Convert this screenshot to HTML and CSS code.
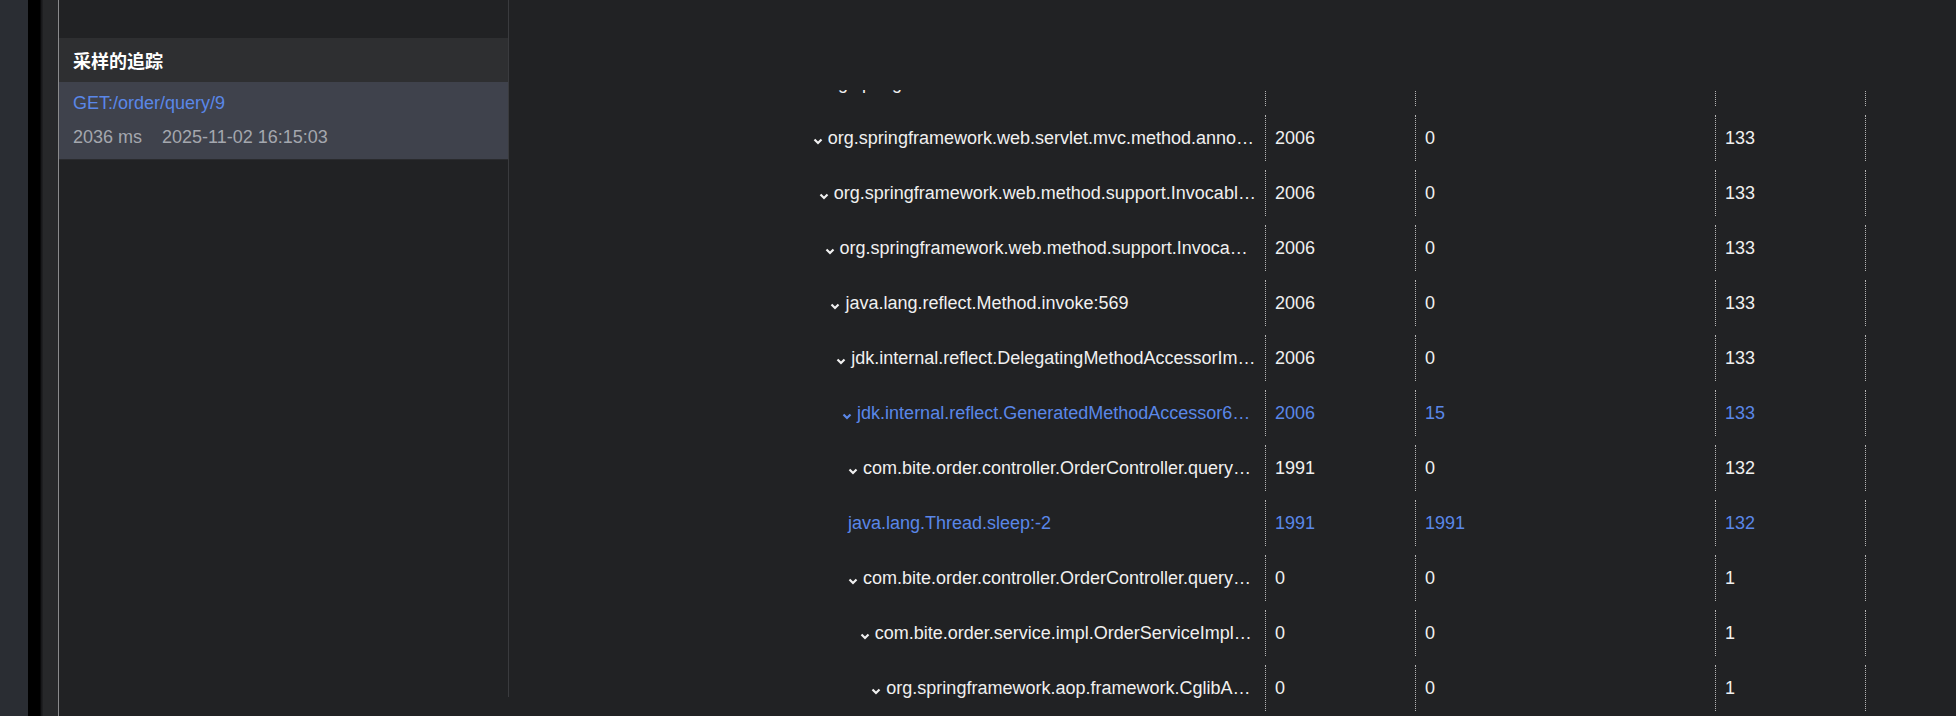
FILE: index.html
```html
<!DOCTYPE html>
<html lang="zh-CN">

<head>
    <meta charset="UTF-8">
    <meta name="viewport" content="width=device-width, initial-scale=1.0">
    <title>采样的追踪</title>
    <link rel="stylesheet" href="styles.css">
</head>

<body>
    <div class="rail"></div>
    <div class="rail-edge"></div>
    <div class="gutter"></div>

    <aside class="sidebar">
        <div class="sidebar-title">采样的追踪</div>
        <div class="trace-item active">
            <div class="trace-url">GET:/order/query/9</div>
            <div class="trace-meta">
                <span class="trace-cost">2036 ms</span>
                <span>2025-11-02 16:15:03</span>
            </div>
        </div>
    </aside>

    <main class="main">
        <div class="tree-view">
            <div class="tree">
                <div class="row" style="--depth: 0">
                    <div class="name"><svg class="chev" viewBox="0 0 10 7"><path d="M1.5 1.5 5 5 8.5 1.5"/></svg>org.springframework.web.servlet.mvc.method.AbstractHandlerMethodAdapter.handle:87</div>
                    <div class="num">2006</div>
                    <div class="num">0</div>
                    <div class="num">133</div>
                    <div class="num"></div>
                </div>
                <div class="row" style="--depth: 1">
                    <div class="name"><svg class="chev" viewBox="0 0 10 7"><path d="M1.5 1.5 5 5 8.5 1.5"/></svg>org.springframework.web.servlet.mvc.method.annotation.RequestMappingHandlerAdapter.handleInternal:808</div>
                    <div class="num">2006</div>
                    <div class="num">0</div>
                    <div class="num">133</div>
                    <div class="num"></div>
                </div>
                <div class="row" style="--depth: 2">
                    <div class="name"><svg class="chev" viewBox="0 0 10 7"><path d="M1.5 1.5 5 5 8.5 1.5"/></svg>org.springframework.web.method.support.InvocableHandlerMethod.invokeAndHandle:118</div>
                    <div class="num">2006</div>
                    <div class="num">0</div>
                    <div class="num">133</div>
                    <div class="num"></div>
                </div>
                <div class="row" style="--depth: 3">
                    <div class="name"><svg class="chev" viewBox="0 0 10 7"><path d="M1.5 1.5 5 5 8.5 1.5"/></svg>org.springframework.web.method.support.InvocableHandlerMethod.doInvoke:255</div>
                    <div class="num">2006</div>
                    <div class="num">0</div>
                    <div class="num">133</div>
                    <div class="num"></div>
                </div>
                <div class="row" style="--depth: 4">
                    <div class="name"><svg class="chev" viewBox="0 0 10 7"><path d="M1.5 1.5 5 5 8.5 1.5"/></svg>java.lang.reflect.Method.invoke:569</div>
                    <div class="num">2006</div>
                    <div class="num">0</div>
                    <div class="num">133</div>
                    <div class="num"></div>
                </div>
                <div class="row" style="--depth: 5">
                    <div class="name"><svg class="chev" viewBox="0 0 10 7"><path d="M1.5 1.5 5 5 8.5 1.5"/></svg>jdk.internal.reflect.DelegatingMethodAccessorImpl.invoke:43</div>
                    <div class="num">2006</div>
                    <div class="num">0</div>
                    <div class="num">133</div>
                    <div class="num"></div>
                </div>
                <div class="row hot" style="--depth: 6">
                    <div class="name"><svg class="chev" viewBox="0 0 10 7"><path d="M1.5 1.5 5 5 8.5 1.5"/></svg>jdk.internal.reflect.GeneratedMethodAccessor64.invoke:-1</div>
                    <div class="num">2006</div>
                    <div class="num">15</div>
                    <div class="num">133</div>
                    <div class="num"></div>
                </div>
                <div class="row" style="--depth: 7">
                    <div class="name"><svg class="chev" viewBox="0 0 10 7"><path d="M1.5 1.5 5 5 8.5 1.5"/></svg>com.bite.order.controller.OrderController.queryOrder:42</div>
                    <div class="num">1991</div>
                    <div class="num">0</div>
                    <div class="num">132</div>
                    <div class="num"></div>
                </div>
                <div class="row hot" style="--depth: 7">
                    <div class="name">java.lang.Thread.sleep:-2</div>
                    <div class="num">1991</div>
                    <div class="num">1991</div>
                    <div class="num">132</div>
                    <div class="num"></div>
                </div>
                <div class="row" style="--depth: 7">
                    <div class="name"><svg class="chev" viewBox="0 0 10 7"><path d="M1.5 1.5 5 5 8.5 1.5"/></svg>com.bite.order.controller.OrderController.queryOrder:45</div>
                    <div class="num">0</div>
                    <div class="num">0</div>
                    <div class="num">1</div>
                    <div class="num"></div>
                </div>
                <div class="row" style="--depth: 9">
                    <div class="name"><svg class="chev" viewBox="0 0 10 7"><path d="M1.5 1.5 5 5 8.5 1.5"/></svg>com.bite.order.service.impl.OrderServiceImpl.selectOrderById:31</div>
                    <div class="num">0</div>
                    <div class="num">0</div>
                    <div class="num">1</div>
                    <div class="num"></div>
                </div>
                <div class="row" style="--depth: 11">
                    <div class="name"><svg class="chev" viewBox="0 0 10 7"><path d="M1.5 1.5 5 5 8.5 1.5"/></svg>org.springframework.aop.framework.CglibAopProxy$DynamicAdvisedInterceptor.intercept:713</div>
                    <div class="num">0</div>
                    <div class="num">0</div>
                    <div class="num">1</div>
                    <div class="num"></div>
                </div>
            </div>
        </div>
    </main>
</body>

</html>
```

FILE: styles.css
```css
* {
    margin: 0;
    padding: 0;
    box-sizing: border-box;
}

body {
    font-family: 'Liberation Sans', Arial, 'Noto Sans CJK SC', sans-serif;
    font-size: 18px;
    background: #212224;
    color: #f0f0f0;
    display: flex;
    height: 716px;
    overflow: hidden;
}

/* window chrome on the far left */
.rail {
    width: 28px;
    flex-shrink: 0;
    background: #2a2d33;
}

.rail-edge {
    width: 15px;
    flex-shrink: 0;
    background: linear-gradient(90deg, #000 0, #000 12px, #141416 13px, #222325 15px);
}

.gutter {
    width: 16px;
    flex-shrink: 0;
    background: #27282a;
    border-right: 1px solid #8a8a8c;
}

/* sampled traces list */
.sidebar {
    width: 450px;
    flex-shrink: 0;
    height: 697px;
    padding-top: 38px;
    border-right: 1px solid #3a3b3e;
}

.sidebar-title {
    height: 44px;
    line-height: 44px;
    padding-left: 14px;
    background: #2e2f31;
    font-family: 'Noto Sans CJK SC', sans-serif;
    font-weight: bold;
    font-size: 18px;
    color: #fff;
}

.trace-item {
    height: 78px;
    padding: 10px 14px 0;
    border-bottom: 1px solid #2a2b2e;
}

.trace-item.active {
    background: #3f424c;
}

.trace-url {
    color: #5a87e8;
    line-height: 22px;
}

.trace-meta {
    margin-top: 12px;
    color: #a4a7ae;
    line-height: 22px;
}

.trace-cost {
    margin-right: 15px;
}

/* call tree */
.main {
    flex: 1;
    padding: 90px 0 0 291px;
}

.tree-view {
    height: 626px;
    overflow: hidden;
}

.tree {
    margin-top: -35px;
}

.row {
    display: grid;
    grid-template-columns: 465px 150px 300px 150px 1fr;
    align-items: center;
    height: 55px;
}

.row.hot {
    color: #5a87e8;
}

.name {
    height: 46px;
    line-height: 46px;
    padding-left: calc(7px + var(--depth) * 5.85px);
    padding-right: 9px;
    white-space: nowrap;
    overflow: hidden;
    text-overflow: ellipsis;
}

.chev {
    width: 10px;
    height: 7px;
    margin-right: 5px;
    vertical-align: -1px;
    fill: none;
    stroke: currentColor;
    stroke-width: 2.2;
}

.num {
    height: 46px;
    line-height: 46px;
    padding-left: 9px;
    border-left: 1px dotted #b4b4b4;
}
```
